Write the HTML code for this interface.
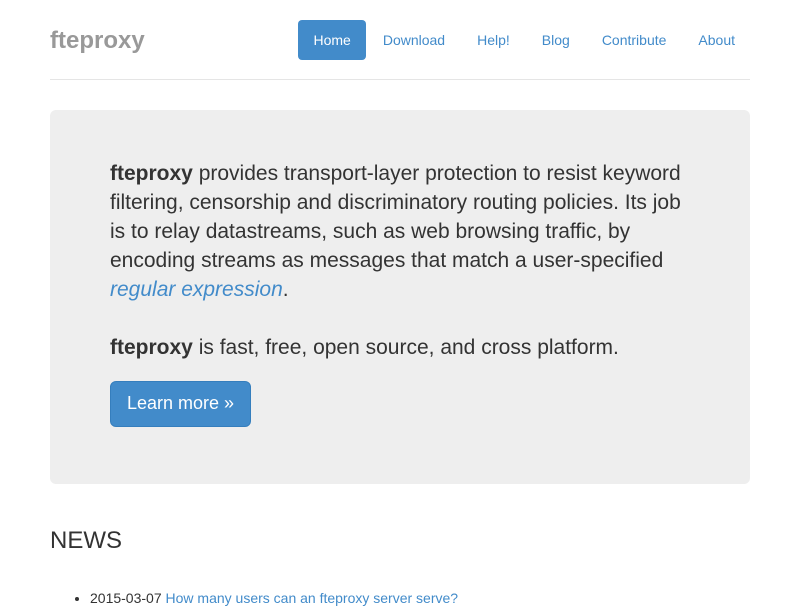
<!DOCTYPE html>
<html><head><meta charset="utf-8"><style>
*{box-sizing:border-box}
body{margin:0;font-family:"Liberation Sans",Helvetica,Arial,sans-serif;font-size:14px;line-height:1.42857;color:#333;background:#fff}
.container{width:700px;margin:0 auto}
.header{height:80px;border-bottom:1px solid #e5e5e5;position:relative}
.brand{position:absolute;left:0;top:25px;font-size:24px;font-weight:bold;color:#999;line-height:32px}
.nav{position:absolute;right:0;top:20px;display:flex;margin:0;padding:0;list-style:none}
.nav li a{display:block;padding:10px 15px;color:#428bca;text-decoration:none;border-radius:4px;margin-left:2px;line-height:20px}
.nav li.active a{background:#428bca;color:#fff}
.jumbo{margin-top:30px;background:#eee;border-radius:6px;padding:49px 60px 58px;height:374px}
.jumbo p{font-size:21px;line-height:29px;margin:0 0 29px;font-weight:normal}
.jumbo p b{font-weight:bold}
.jumbo a{color:#428bca;text-decoration:none}
.btn{display:inline-block;background:#428bca;border:1px solid #357ebd;color:#fff!important;font-size:18px;padding:10px 16px;border-radius:6px;line-height:1.33;margin-top:-10px}
h2{font-size:24px;font-weight:500;margin:42px 0 33px;line-height:30px}
ul{margin:0;padding-left:40px}
ul a{color:#428bca;text-decoration:none}
</style></head><body><div class="container">
<div class="header"><div class="brand">fteproxy</div>
<ul class="nav"><li class="active"><a>Home</a></li><li><a>Download</a></li><li><a>Help!</a></li><li><a>Blog</a></li><li><a>Contribute</a></li><li><a>About</a></li></ul></div>
<div class="jumbo">
<p><b>fteproxy</b> provides transport-layer protection to resist keyword filtering, censorship and discriminatory routing policies. Its job is to relay datastreams, such as web browsing traffic, by encoding streams as messages that match a user-specified <a><i>regular expression</i></a>.</p>
<p><b>fteproxy</b> is fast, free, open source, and cross platform.</p>
<a class="btn">Learn more »</a>
</div>
<h2>NEWS</h2>
<ul><li>2015-03-07 <a>How many users can an fteproxy server serve?</a></li></ul>
</div></body></html>
